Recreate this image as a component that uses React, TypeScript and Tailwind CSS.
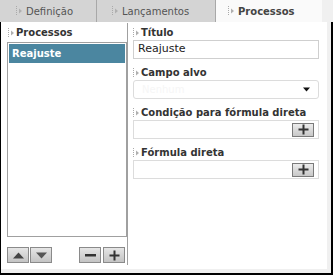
import React from "react";

function Grip() {
  return (
    <svg width="7" height="10" viewBox="0 0 7 10" className="shrink-0">
      <rect x="0" y="0" width="1" height="1" fill="#aaa" />
      <rect x="0" y="2" width="1" height="1" fill="#aaa" />
      <rect x="0" y="4" width="1" height="1" fill="#aaa" />
      <rect x="0" y="6" width="1" height="1" fill="#aaa" />
      <rect x="0" y="8" width="1" height="1" fill="#aaa" />
      <polygon points="3,2.5 6,5 3,7.5" fill="#b0b0b0" />
    </svg>
  );
}

function Label({ text }: { text: string }) {
  return (
    <div className="h-[15px] flex items-center gap-[1px] text-[10px] font-bold text-[#333]">
      <Grip />
      <span>{text}</span>
    </div>
  );
}

function SmallBtn({ children, w = "w-[22px]" }: { children: React.ReactNode; w?: string }) {
  return (
    <div
      className={`${w} h-[16px] flex items-center justify-center border border-[#8a8a8a] bg-gradient-to-b from-[#e6e6e6] to-[#c4c4c4]`}
    >
      {children}
    </div>
  );
}

function PlusIcon() {
  return (
    <svg width="11" height="11" viewBox="0 0 11 11">
      <rect x="4.5" y="0.5" width="2" height="10" fill="#333" />
      <rect x="0.5" y="4.5" width="10" height="2" fill="#333" />
    </svg>
  );
}

export default function App() {
  return (
    <div
      className="w-[333px] h-[275px] flex flex-col bg-white"
      style={{ fontFamily: '"DejaVu Sans", Verdana, sans-serif' }}
    >
      {/* Tabs */}
      <div className="h-[22px] flex shrink-0 bg-[#f0f0f0]">
        <div className="w-[97px] bg-[#d4d4d4] border-r border-[#a8a8a8] flex items-center pl-[16px] gap-[1px] text-[10px] text-[#555]">
          <Grip />
          <span className="ml-[2px]">Definição</span>
        </div>
        <div className="w-[119px] bg-[#d4d4d4] border-r border-[#a8a8a8] flex items-center pl-[15px] gap-[1px] text-[10px] text-[#555]">
          <Grip />
          <span className="ml-[2px]">Lançamentos</span>
        </div>
        <div className="w-[106px] bg-[#fafafa] flex items-center pl-[12px] gap-[1px] text-[10px] font-bold text-[#444]">
          <Grip />
          <span className="ml-[2px]">Processos</span>
        </div>
        <div className="flex-1 bg-[#f0f0f0]" />
      </div>

      {/* Content frame */}
      <div className="flex-1 flex flex-col border-l border-r-2 border-b-2 border-black bg-[#f0f0f0]">
        <div className="flex-1 flex bg-white mr-[4px] mb-[4px]">
          {/* Left column */}
          <div className="w-[127px] shrink-0 flex flex-col">
            <div className="mt-[1px] h-[242px] border-r border-[#a0a0a0] flex flex-col pl-[6px] pt-[2px]">
              <div className="pl-[1px]">
                <Label text="Processos" />
              </div>
              <div className="mt-[2px] w-[120px] h-[195px] border border-[#a0a0a0] p-[1px]">
                <div className="h-[19px] bg-[#4b86a0] text-white text-[10px] font-bold flex items-center pl-[3px]">
                  Reajuste
                </div>
              </div>
              <div className="mt-[10px] flex items-center">
                <div className="flex gap-[1px]">
                  <SmallBtn>
                    <svg width="11" height="7" viewBox="0 0 11 7">
                      <polygon points="0,6.5 5.5,0.5 11,6.5" fill="#444" />
                    </svg>
                  </SmallBtn>
                  <SmallBtn>
                    <svg width="11" height="7" viewBox="0 0 11 7">
                      <polygon points="0,0.5 11,0.5 5.5,6.5" fill="#555" />
                    </svg>
                  </SmallBtn>
                </div>
                <div className="ml-[27px] flex gap-[2px]">
                  <SmallBtn>
                    <svg width="11" height="3" viewBox="0 0 11 3">
                      <rect x="0" y="0" width="11" height="2.5" fill="#333" />
                    </svg>
                  </SmallBtn>
                  <SmallBtn>
                    <PlusIcon />
                  </SmallBtn>
                </div>
              </div>
            </div>
          </div>

          {/* Right column */}
          <div className="flex-1 flex flex-col pl-[5px] pt-[3px]">
            <Label text="Título" />
            <div className="w-[186px] h-[19px] border border-[#cfcfcf] flex items-center pl-[4px] text-[11px] text-[#222]">
              Reajuste
            </div>

            <div className="mt-[6px]">
              <Label text="Campo alvo" />
            </div>
            <div className="w-[186px] h-[19px] border border-[#dcdcdc] rounded-[3px] flex items-center justify-between pl-[8px] pr-[8px] text-[10px] text-[#f6f6f6]">
              <span>Nenhum</span>
              <svg width="7" height="5" viewBox="0 0 7 5">
                <polygon points="0,0.5 7,0.5 3.5,4.5" fill="#111" />
              </svg>
            </div>

            <div className="mt-[6px]">
              <Label text="Condição para fórmula direta" />
            </div>
            <div className="w-[186px] h-[19px] border border-[#dcdcdc] flex items-center justify-end pr-[4px]">
              <div className="w-[22px] h-[14px] border border-[#7a7a7a] bg-gradient-to-b from-[#ececec] to-[#c8c8c8] flex items-center justify-center">
                <PlusIcon />
              </div>
            </div>

            <div className="mt-[6px]">
              <Label text="Fórmula direta" />
            </div>
            <div className="w-[186px] h-[19px] border border-[#dcdcdc] flex items-center justify-end pr-[4px]">
              <div className="w-[22px] h-[14px] border border-[#7a7a7a] bg-gradient-to-b from-[#ececec] to-[#c8c8c8] flex items-center justify-center">
                <PlusIcon />
              </div>
            </div>
          </div>
        </div>
      </div>
    </div>
  );
}
